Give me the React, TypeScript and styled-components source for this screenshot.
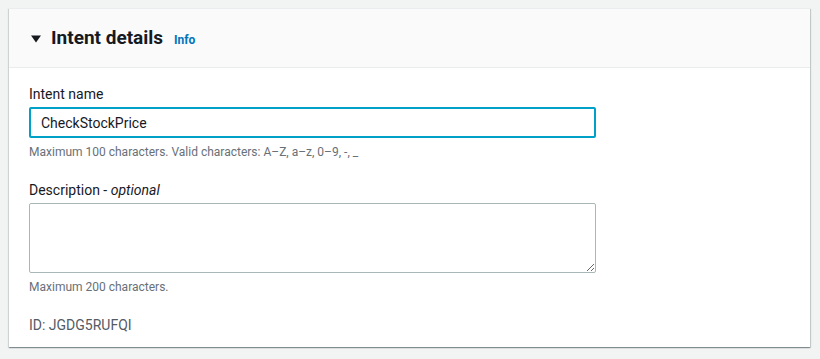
import React from 'react';
import styled, { createGlobalStyle } from 'styled-components';

const GlobalStyle = createGlobalStyle`
  html, body {
    margin: 0;
    padding: 0;
    background: #f2f3f3;
    font-family: Roboto, "Open Sans", Arial, sans-serif;
    color: #16191f;
  }
`;

const Page = styled.div`
  padding: 8px 10px 11px 9px;
`;

const Card = styled.section`
  background: #ffffff;
  box-shadow: 0 1px 1px 0 rgba(0, 28, 36, 0.3), 1px 1px 1px 0 rgba(0, 28, 36, 0.15), -1px 1px 1px 0 rgba(0, 28, 36, 0.1);
  border-top: 1px solid #eaeded;
`;

const Header = styled.header`
  display: flex;
  align-items: center;
  height: 58px;
  padding: 0 20px 0 22px;
  background: #fafafa;
  border-bottom: 1px solid #eaeded;
`;

const Caret = styled.svg`
  width: 10px;
  height: 10px;
  margin-right: 10px;
  margin-top: 1px;
`;

const Title = styled.h2`
  margin: 0;
  font-size: 19px;
  font-weight: 700;
  line-height: 22px;
  color: #16191f;
`;

const InfoLink = styled.a`
  margin-left: 11px;
  margin-top: 3px;
  font-size: 12px;
  font-weight: 700;
  color: #0073bb;
  text-decoration: none;
`;

const Body = styled.div`
  display: flex;
  flex-direction: column;
  padding: 15px 20px 11px 20px;
`;

const Field = styled.div<{ $gap?: number }>`
  display: flex;
  flex-direction: column;
  width: 567px;
  margin-bottom: ${p => p.$gap ?? 0}px;
`;

const Label = styled.label`
  font-size: 14px;
  line-height: 22px;
  margin-bottom: 2px;
  em {
    font-style: italic;
  }
`;

const TextInput = styled.input`
  box-sizing: border-box;
  height: 31px;
  padding: 4px 10px;
  border: 2px solid #00a1c9;
  border-radius: 2px;
  font-family: inherit;
  font-size: 14px;
  color: #16191f;
  outline: none;
`;

const TextArea = styled.textarea`
  box-sizing: border-box;
  height: 70px;
  padding: 4px 10px;
  border: 1px solid #aab7b8;
  border-radius: 2px;
  font-family: inherit;
  font-size: 14px;
  resize: vertical;
  outline: none;
`;

const Hint = styled.div`
  font-size: 12px;
  line-height: 16px;
  color: #687078;
  margin-top: 6px;
`;

const IdLine = styled.div`
  font-size: 14px;
  line-height: 22px;
  color: #545b64;
`;

export default function App() {
  return (
    <>
      <GlobalStyle />
      <Page>
        <Card>
          <Header>
            <Caret viewBox="0 0 10 10">
              <polygon points="0,1.5 10,1.5 5,8.5" fill="#16191f" />
            </Caret>
            <Title>Intent details</Title>
            <InfoLink href="#">Info</InfoLink>
          </Header>
          <Body>
            <Field $gap={19}>
              <Label>Intent name</Label>
              <TextInput defaultValue="CheckStockPrice" />
              <Hint>Maximum 100 characters. Valid characters: A–Z, a–z, 0–9, -, _</Hint>
            </Field>
            <Field $gap={19}>
              <Label>
                Description - <em>optional</em>
              </Label>
              <TextArea />
              <Hint>Maximum 200 characters.</Hint>
            </Field>
            <IdLine>ID: JGDG5RUFQI</IdLine>
          </Body>
        </Card>
      </Page>
    </>
  );
}
